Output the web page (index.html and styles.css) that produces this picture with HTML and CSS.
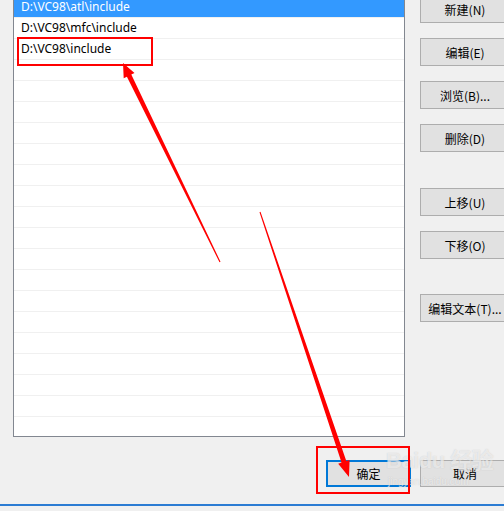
FILE: index.html
```html
<!DOCTYPE html>
<html lang="zh-CN">
<head>
<meta charset="utf-8">
<link rel="stylesheet" href="styles.css">
</head>
<body>
<div class="dialog">
  <div class="main">
    <div class="listbox">
      <ul class="rows">
        <li class="row selected">D:\VC98\atl\include</li>
        <li class="row">D:\VC98\mfc\include</li>
        <li class="row">D:\VC98\include</li>
        <li class="row"></li><li class="row"></li><li class="row"></li><li class="row"></li>
        <li class="row"></li><li class="row"></li><li class="row"></li><li class="row"></li>
        <li class="row"></li><li class="row"></li><li class="row"></li><li class="row"></li>
        <li class="row"></li><li class="row"></li><li class="row"></li><li class="row"></li>
        <li class="row"></li><li class="row"></li><li class="row"></li>
      </ul>
    </div>
    <div class="side">
      <button class="btn first">新建(N)</button>
      <button class="btn">编辑(E)</button>
      <button class="btn">浏览(B)...</button>
      <button class="btn">删除(D)</button>
      <button class="btn group">上移(U)</button>
      <button class="btn">下移(O)</button>
      <button class="btn group">编辑文本(T)...</button>
    </div>
  </div>
  <div class="footer">
    <button class="btn ok">确定</button>
    <button class="btn cancel">取消</button>
  </div>
  <div class="frame-edge"></div>
</div>

<div class="watermark">
  <span class="wm-big">Baidu 经验</span>
  <span class="wm-small">jingyan.baidu.com</span>
</div>

<svg class="annotations" width="504" height="511" viewBox="0 0 504 511" xmlns="http://www.w3.org/2000/svg">
  <rect x="18" y="38" width="134" height="27" fill="none" stroke="#ff0000" stroke-width="2"/>
  <rect x="317" y="447" width="92" height="46" fill="none" stroke="#ff0000" stroke-width="2"/>
  <polygon fill="#ff0000" points="123,63 134.5,73 131.3,74.5 220.5,261.8 219.5,262.2 126.9,76.7 123.7,78.2"/>
  <polygon fill="#ff0000" points="349,477 349.6,459.9 346.3,461 260.5,211.8 259.5,212.2 341.5,462.6 338.2,463.7"/>
</svg>
</body>
</html>
```

FILE: styles.css
```css
html, body {
  margin: 0;
  padding: 0;
  width: 504px;
  height: 511px;
  overflow: hidden;
  background: #f0f0f0;
}

body {
  position: relative;
  font-family: "Noto Sans", "Noto Sans CJK SC", sans-serif;
  font-size: 12px;
  color: #000;
}

.dialog {
  display: flex;
  flex-direction: column;
  height: 511px;
}

.main {
  display: flex;
  align-items: flex-start;
}

.listbox {
  flex: none;
  margin-left: 13px;
  width: 390px;
  height: 436px;
  background: #fff;
  border: 1px solid #828790;
  border-top: none;
  overflow: hidden;
}

.rows {
  list-style: none;
  margin: -3px 0 0 0;
  padding: 0;
}

.row {
  height: 20px;
  line-height: 20px;
  border-bottom: 1px solid #f0f0f0;
  padding-left: 7px;
  white-space: nowrap;
}

.row.selected {
  background: #3399ff;
  color: #fff;
}

.side {
  flex: none;
  display: flex;
  flex-direction: column;
  gap: 15px;
  margin-left: 15px;
  margin-top: -5px;
}

.btn {
  box-sizing: border-box;
  width: 90px;
  height: 28px;
  background: #e1e1e1;
  border: 1px solid #adadad;
  font-family: "Noto Sans CJK SC", "Noto Sans", sans-serif;
  font-size: 12px;
  color: #000;
  padding: 0;
  white-space: nowrap;
  flex: none;
}

.side .group {
  margin-top: 21px;
}

.side .group:last-child {
  margin-top: 20px;
}

.footer {
  display: flex;
  gap: 9px;
  margin-top: 23px;
  padding-left: 326px;
}

.btn.ok {
  width: 85px;
  height: 27px;
  border: 2px solid #0078d7;
}

.btn.cancel {
  height: 27px;
}

.frame-edge {
  margin-top: 17px;
  height: 2px;
  background: #2b7cd3;
  flex: none;
}

.watermark {
  position: absolute;
  left: 386px;
  top: 446px;
  display: flex;
  flex-direction: column;
  pointer-events: none;
  white-space: nowrap;
  color: rgba(255, 255, 255, 0.6);
  text-shadow: 0 0 1px rgba(160, 160, 160, 0.5);
}

.wm-big {
  font-family: "Liberation Sans", "Noto Sans CJK SC", sans-serif;
  font-size: 22px;
  font-weight: bold;
  line-height: 30px;
  letter-spacing: -0.5px;
}

.wm-small {
  font-family: "Liberation Sans", sans-serif;
  font-size: 10px;
  line-height: 12px;
  padding-left: 2px;
}

.annotations {
  position: absolute;
  left: 0;
  top: 0;
  pointer-events: none;
}
```
